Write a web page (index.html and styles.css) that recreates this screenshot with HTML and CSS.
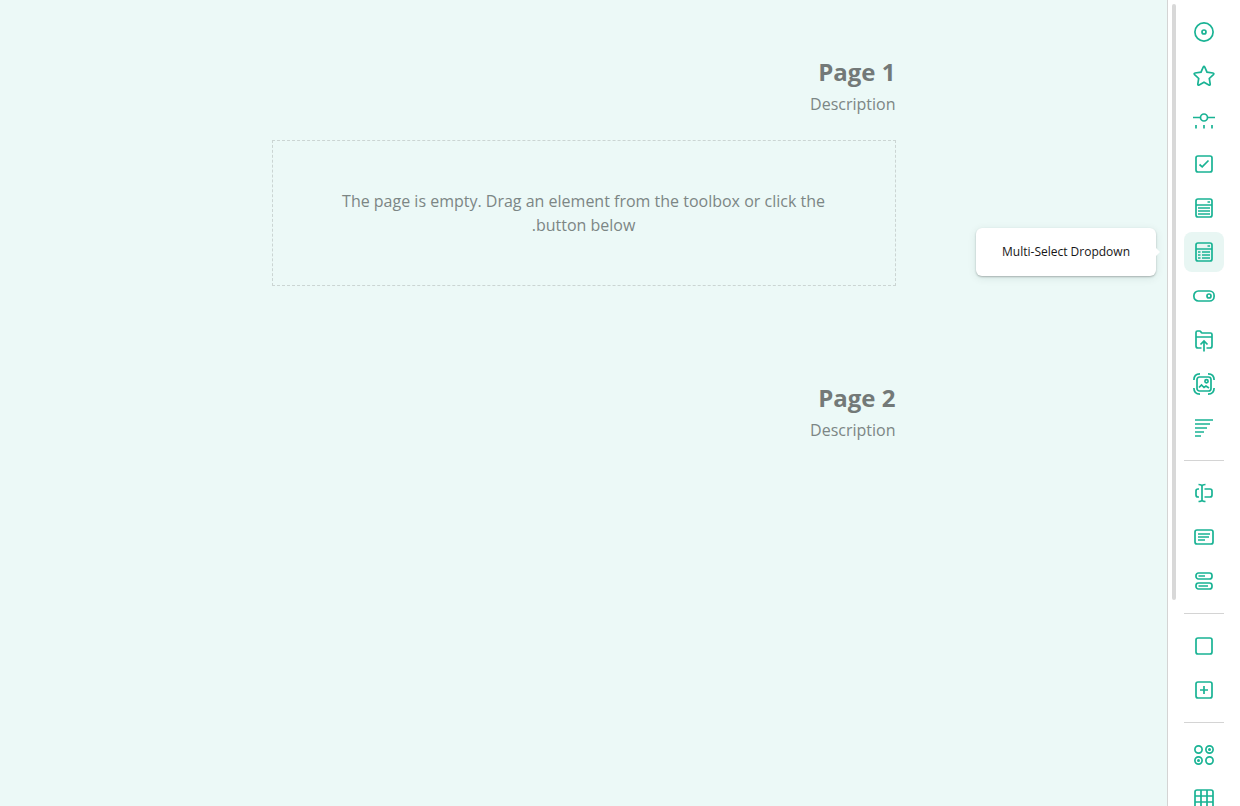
FILE: index.html
```html
<!DOCTYPE html>
<html lang="en">
<head>
<meta charset="utf-8">
<title>Survey designer</title>
<link rel="stylesheet" href="styles.css">
</head>
<body>
<div class="designer">
  <main class="canvas" dir="rtl">
    <section class="page">
      <h2 class="page-title">Page 1</h2>
      <p class="page-description">Description</p>
      <div class="placeholder">The page is empty. Drag an element from the toolbox or click the button below.</div>
    </section>
    <section class="page">
      <h2 class="page-title">Page 2</h2>
      <p class="page-description">Description</p>
    </section>
  </main>
  <aside class="toolbox">
    <div class="scrollbar"></div>
    <div class="tools">
      <button class="tool" aria-label="Radio Button Group"><svg viewBox="0 0 24 24"><circle cx="12" cy="12" r="9.100"/><circle cx="12" cy="12" r="2"/></svg></button>
      <button class="tool" aria-label="Rating Scale"><svg viewBox="0 0 24 24"><path d="M11.200 3.100Q12 1.800 12.800 3.100L15 8.200L20.900 9Q22.500 9.400 21.400 10.600L17.300 14.500L18.200 20Q18.300 21.600 16.800 21L12 18.200L7.200 21Q5.700 21.600 5.800 20L6.700 14.500L2.600 10.600Q1.500 9.400 3.100 9L9 8.200Z"/></svg></button>
      <button class="tool" aria-label="Slider"><svg viewBox="0 0 24 24"><circle cx="12" cy="9.500" r="3.500"/><path d="M1 9.500H8.500M15.500 9.500H23M4 17V20.500M12 17V20.500M20 17V20.500"/></svg></button>
      <button class="tool" aria-label="Checkboxes"><svg viewBox="0 0 24 24"><rect x="4" y="4" width="16" height="16" rx="2"/><path d="M7.500 12.500L10.200 14.800L16.500 8.500"/></svg></button>
      <button class="tool" aria-label="Dropdown"><svg viewBox="0 0 24 24"><rect x="4" y="3" width="16" height="18" rx="2"/><path d="M4 9H20M15.500 6H18M6 12H18M6 15H18M6 18H18"/></svg></button>
      <div class="tool-anchor">
        <button class="tool tool-active" aria-describedby="tool-tip" aria-label="Multi-Select Dropdown"><svg viewBox="0 0 24 24"><rect x="4" y="3" width="16" height="18" rx="2"/><path d="M4 9H20M15.500 6H18M6 12H8.500M10 12H18M6 15H8.500M10 15H18M6 18H8.500M10 18H18"/></svg></button>
        <div class="tooltip" id="tool-tip" role="tooltip">Multi-Select Dropdown</div>
      </div>
      <button class="tool" aria-label="Yes/No"><svg viewBox="0 0 24 24"><rect x="1.900" y="7" width="20.200" height="10" rx="4.500"/><circle cx="17" cy="12" r="2"/></svg></button>
      <button class="tool" aria-label="File Upload"><svg viewBox="0 0 24 24"><path d="M9.500 20H6Q4 20 4 18V4.500Q4 3 5.500 3H7.500Q8.500 3 9 4Q9.300 5 10.300 5H18.500Q20 5 20 6.500V18Q20 20 18 20H14.500M4 9H20M12 23.500V13.500M8.500 16.500L12 13L15.500 16.500"/></svg></button>
      <button class="tool" aria-label="Image Picker"><svg viewBox="0 0 24 24"><rect x="5" y="5" width="14" height="14" rx="2.500"/><circle cx="14.500" cy="9.300" r="1.600"/><path d="M7 15.500L9.500 13L12 15.500L14 14L17 16M1.900 8Q1.900 1.900 8 1.900M16 1.900Q22.100 1.900 22.100 8M22.100 16Q22.100 22.100 16 22.100M8 22.100Q1.900 22.100 1.900 16"/></svg></button>
      <button class="tool" aria-label="Ranking"><svg viewBox="0 0 24 24"><path d="M3 4H21M3 8H18M3 12H15M3 16H12M3 20H9"/></svg></button>
      <hr class="divider">
      <button class="tool" aria-label="Single-Line Input"><svg viewBox="0 0 24 24"><path d="M10 4V20M6.500 3.500Q9.500 3.500 10 5Q10.500 3.500 13.500 3.500M6.500 20.500Q9.500 20.500 10 19Q10.500 20.500 13.500 20.500M7 8H6Q4 8 4 10V14Q4 16 6 16H7M12.500 8H18Q20 8 20 10V14Q20 16 18 16H12.500"/></svg></button>
      <button class="tool" aria-label="Long Text"><svg viewBox="0 0 24 24"><rect x="3" y="5" width="18" height="14" rx="2"/><path d="M6 9H18M6 12H17M6 15H13"/></svg></button>
      <button class="tool" aria-label="Multiple Textboxes"><svg viewBox="0 0 24 24"><rect x="4" y="4" width="16" height="6" rx="2.500"/><rect x="4" y="14" width="16" height="6" rx="2.500"/><path d="M6.500 7H13M6.500 17H16"/></svg></button>
      <hr class="divider">
      <button class="tool" aria-label="Panel"><svg viewBox="0 0 24 24"><rect x="4" y="4" width="16" height="16" rx="2"/></svg></button>
      <button class="tool" aria-label="Dynamic Panel"><svg viewBox="0 0 24 24"><rect x="4" y="4" width="16" height="16" rx="2"/><path d="M8 12H16M12 8V16"/></svg></button>
      <hr class="divider">
      <button class="tool" aria-label="Single-Select Matrix"><svg viewBox="0 0 24 24"><circle cx="6.500" cy="6.500" r="3.600"/><circle cx="17.500" cy="6.500" r="3.600"/><circle cx="6.500" cy="17.500" r="3.600"/><circle cx="17.500" cy="17.500" r="3.600"/><circle class="dot" cx="17.500" cy="6.500" r="1.500"/><circle class="dot" cx="6.500" cy="17.500" r="1.500"/></svg></button>
      <button class="tool" aria-label="Multi-Select Matrix"><svg viewBox="0 0 24 24"><rect x="3" y="3" width="18" height="18" rx="2"/><path d="M3 9H21M3 15H21M9 3V21M15 3V21"/></svg></button>
    </div>
  </aside>
</div>
</body>
</html>
```
FILE: styles.css
```css
* { box-sizing: border-box; }

body {
  margin: 0;
  font-family: "Open Sans", sans-serif;
  font-size: 16px;
  line-height: 24px;
}

.designer {
  display: flex;
  height: 100vh;
  overflow: hidden;
}

.canvas {
  flex: 1;
  display: flex;
  flex-direction: column;
  align-items: center;
  gap: 96px;
  padding: 56px 16px;
  background: #ecf9f7;
  color: #7c8685;
}

.page {
  width: 100%;
  max-width: 624px;
}

.page-title {
  margin: 0;
  font-size: 24px;
  font-weight: 700;
  line-height: 32px;
  color: #737978;
}

.page-description {
  margin: 4px 0 0;
}

.placeholder {
  margin-top: 24px;
  padding: 48px 64px;
  border: 1px dashed #cbd5d3;
  text-align: center;
}

.toolbox {
  display: flex;
  gap: 8px;
  padding: 0 16px 0 4px;
  border-left: 1px solid #d4d4d4;
  background: #fff;
}

.scrollbar {
  width: 4px;
  height: 74vh;
  margin-top: 4px;
  border-radius: 2px;
  background: #d8d8d8;
}

.tools {
  display: flex;
  flex-direction: column;
  gap: 4px;
  padding-top: 12px;
}

.tool {
  display: block;
  flex: none;
  width: 40px;
  height: 40px;
  padding: 8px;
  border: 0;
  border-radius: 8px;
  background: none;
}

.tool-active { background: #e8f6f3; }

.tool svg {
  display: block;
  width: 24px;
  height: 24px;
  fill: none;
  stroke: #19b394;
  stroke-width: 1.7;
}

.tool .dot {
  fill: #19b394;
  stroke: none;
}

.divider {
  flex: none;
  width: 40px;
  height: 1px;
  margin: 8px 0;
  border: 0;
  background: #d4d4d4;
}

.tool-anchor { position: relative; }

.tooltip {
  position: absolute;
  top: -4px;
  right: 68px;
  padding: 12px 26px;
  border-radius: 6px;
  background: #fff;
  box-shadow: 0 1px 2px rgba(0, 0, 0, 0.25), 0 2px 8px rgba(0, 60, 50, 0.1);
  color: #161616;
  font-size: 12px;
  line-height: 24px;
  white-space: nowrap;
}

.tooltip::after {
  content: "";
  position: absolute;
  top: 20px;
  left: 100%;
  border: 4px solid transparent;
  border-right: 0;
  border-left-color: #fff;
}
```
